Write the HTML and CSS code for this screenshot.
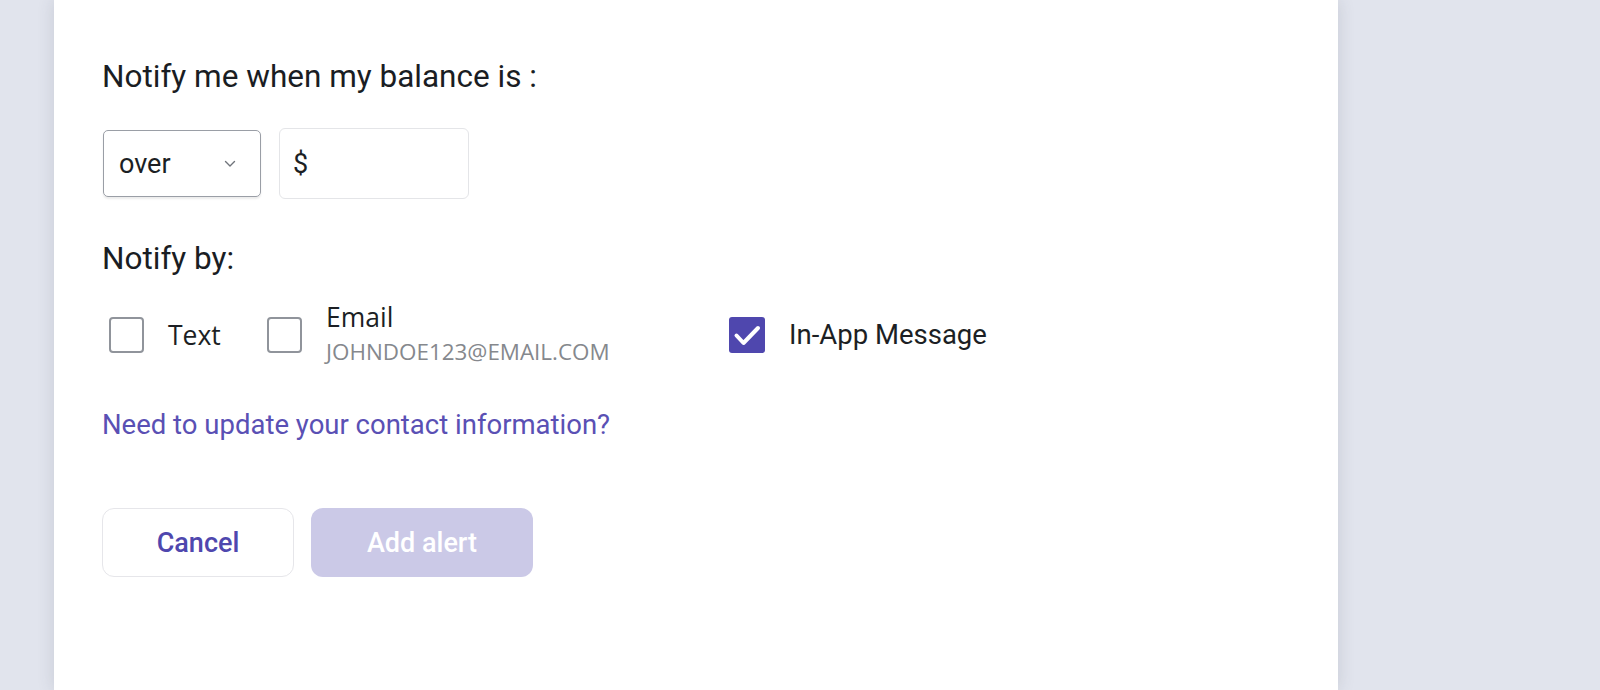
FILE: index.html
```html
<!DOCTYPE html>
<html lang="en">
<head>
<meta charset="utf-8">
<title>Balance alert</title>
<link rel="stylesheet" href="styles.css">
</head>
<body>
<main class="panel">
  <h2 class="heading">Notify me when my balance is :</h2>
  <div class="amount-row">
    <div class="select">
      <span class="select-value">over</span>
      <svg class="chevron" width="12" height="8" viewBox="0 0 12 8"><path d="M1.5 1.5l4.5 4.5 4.5-4.5" fill="none" stroke="#70747b" stroke-width="1.4" stroke-linecap="round" stroke-linejoin="round"/></svg>
    </div>
    <div class="amount-input"><span class="currency">$</span></div>
  </div>

  <h2 class="heading heading-by">Notify by:</h2>
  <div class="channels">
    <label class="channel">
      <span class="box"></span>
      <span class="channel-label">Text</span>
    </label>
    <label class="channel">
      <span class="box"></span>
      <span class="channel-stack">
        <span class="channel-label">Email</span>
        <span class="channel-sub">JOHNDOE123@EMAIL.COM</span>
      </span>
    </label>
    <label class="channel">
      <span class="box box-checked">
        <svg width="36" height="36" viewBox="0 0 36 36"><path d="M7.5 18.5l7 7.5L29 11" fill="none" stroke="#ffffff" stroke-width="4" stroke-linecap="round" stroke-linejoin="round"/></svg>
      </span>
      <span class="channel-label app-label">In-App Message</span>
    </label>
  </div>

  <a class="contact-link" href="#">Need to update your contact information?</a>

  <div class="actions">
    <button class="btn btn-cancel" type="button">Cancel</button>
    <button class="btn btn-add" type="button">Add alert</button>
  </div>
</main>
</body>
</html>
```

FILE: styles.css
```css
html, body {
  margin: 0;
  padding: 0;
}

body {
  background: #e1e4ed;
  height: 690px;
  overflow: hidden;
  font-family: Roboto, "Liberation Sans", sans-serif;
  color: #1c1f24;
}

.panel {
  margin-left: 54px;
  width: 1284px;
  min-height: 690px;
  box-sizing: border-box;
  background: #ffffff;
  padding: 58px 48px 0;
  box-shadow: 0 0 16px rgba(60, 66, 90, 0.16);
}

.heading {
  margin: 0;
  font-size: 31.5px;
  line-height: 38px;
  font-weight: 400;
  color: #1a1d23;
}

.amount-row {
  display: flex;
  align-items: center;
  gap: 18px;
  margin-top: 32px;
  height: 71px;
}

.select {
  width: 158px;
  height: 67px;
  box-sizing: border-box;
  margin-left: 1px;
  border: 1.5px solid #9a9ea6;
  border-radius: 5px;
  box-shadow: 0 2px 2px rgba(0, 0, 0, 0.08);
  display: flex;
  align-items: center;
  justify-content: space-between;
  padding: 0 24px 0 15px;
}

.select-value {
  font-size: 27px;
  color: #1c1f24;
}

.chevron {
  display: block;
}

.amount-input {
  width: 190px;
  height: 71px;
  box-sizing: border-box;
  border: 1px solid #e4e5e8;
  border-radius: 6px;
  display: flex;
  align-items: center;
  padding-left: 13px;
}

.currency {
  font-size: 27px;
  color: #1c1f24;
}

.heading-by {
  margin-top: 41px;
}

.channels {
  display: grid;
  grid-template-columns: 158px 462px auto;
  align-items: center;
  margin: 22px 0 0 7px;
  height: 70px;
}

.channel {
  display: flex;
  align-items: center;
  gap: 24px;
}

.box {
  width: 35px;
  height: 36px;
  box-sizing: border-box;
  border: 2px solid #90949b;
  border-radius: 4px;
  flex: none;
}

.box-checked {
  width: 36px;
  border: none;
  background: #4f47ae;
  border-radius: 3px;
}

.box-checked svg {
  display: block;
}

.channel-label {
  font-family: "Open Sans", "Noto Sans", sans-serif;
  font-size: 26.5px;
  line-height: 32px;
  color: #1c1f24;
}

.app-label {
  font-family: Roboto, "Liberation Sans", sans-serif;
  font-size: 27.5px;
}

.channel-stack {
  display: flex;
  flex-direction: column;
  gap: 5px;
  margin-top: -4px;
}

.channel-sub {
  font-family: "Open Sans", "Noto Sans", sans-serif;
  font-size: 22.4px;
  line-height: 28px;
  color: #85888d;
}

.contact-link {
  display: block;
  margin-top: 38px;
  font-size: 27.5px;
  line-height: 34px;
  color: #5a50b4;
  text-decoration: none;
}

.actions {
  display: flex;
  gap: 17px;
  margin-top: 66px;
}

.btn {
  height: 69px;
  border-radius: 12px;
  font-family: Roboto, "Liberation Sans", sans-serif;
  font-size: 27px;
  font-weight: 500;
  cursor: pointer;
  padding: 0;
}

.btn-cancel {
  width: 192px;
  background: #ffffff;
  border: 1.5px solid #e6e6ea;
  color: #4f47ae;
}

.btn-add {
  width: 222px;
  background: #cbc9e7;
  border: none;
  color: #ffffff;
}
```
